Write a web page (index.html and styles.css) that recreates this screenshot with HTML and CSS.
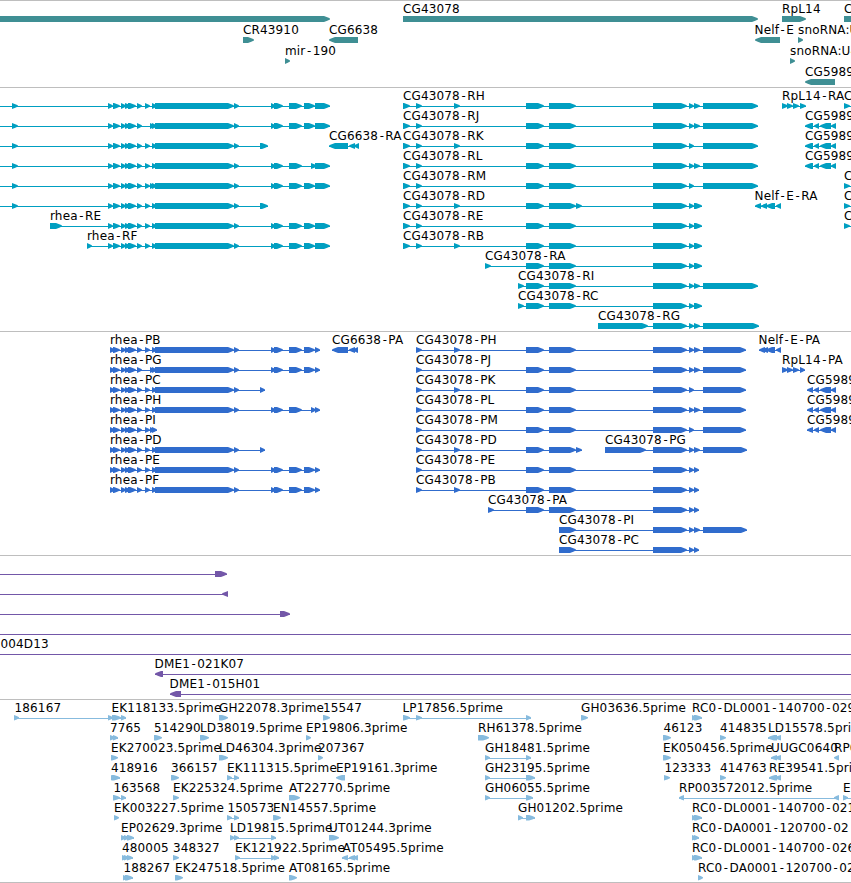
FILE: index.html
```
<!DOCTYPE html>
<html lang="en">
<head>
    <meta charset="UTF-8">
    <title>Genome Browser</title>
    <link rel="stylesheet" href="styles.css">
</head>
<body>
    <div class="browser">
        <div class="track genes" id="genes"></div>
        <div class="track transcripts" id="transcripts"></div>
        <div class="track proteins" id="proteins"></div>
        <div class="track clones" id="clones"></div>
        <div class="track ests" id="ests"></div>
    </div>
    <script src="tracks.js"></script>
</body>
</html>
```
FILE: styles.css
```
body {
    margin: 0;
    background: #fff;
    overflow: hidden;
}

.browser {
    display: flex;
    flex-direction: column;
    width: 851px;
    height: 883px;
    overflow: hidden;
    border-bottom: 1px solid #bebebe;
    box-sizing: border-box;
}

.track {
    box-sizing: border-box;
    border-top: 1px solid #bebebe;
    flex: none;
}

.track svg {
    display: block;
    width: 851px;
    height: 100%;
    overflow: hidden;
}

.genes {
    height: 87px;
    fill: #3f8f94;
}

.transcripts {
    height: 244px;
    fill: #009fc1;
}

.proteins {
    height: 224px;
    fill: #306ccd;
}

.clones {
    height: 144px;
    fill: #7357a8;
}

.ests {
    height: 183px;
    fill: #87bbde;
}

.label {
    font-family: "DejaVu Sans", sans-serif;
    font-size: 12px;
    letter-spacing: 0.15px;
    fill: #000;
}

.dash {
    font-family: "DejaVu Sans Mono", monospace;
    letter-spacing: 0;
}

.intron {
    shape-rendering: crispEdges;
}
```
FILE: tracks.js
```
// feature: [row, strand, label, label x, exons, line start, line end]
// exons are "start-end" pairs separated by spaces

var rhea = '113-120 121-126 125-131 128-136 137-142 ';
var body = '152-157 155-234 234-239 ';
var tail = '271-276 274-283 289-302 ';
var mid = '526-544 549-576 ';
var end3 = '653-687 689-694 694-700 703-758';
var end2 = '653-687 689-694 703-758';
var endS = '653-687 689-694 694-702';
var pEnd3 = '653-687 689-694 694-700 703-746';
var pEnd2 = '653-687 689-694 703-746';
var pEndS = '653-687 689-694 694-699';
var cg5989 = '805-813 814-819 820-831 831-836';
var cg5989p = '807-813 814-819 820-831 831-836';

var genes = [
    [0, '+', '', 0, '-10-330'],
    [0, '+', 'CG43078', 403, '403-758'],
    [0, '+', 'RpL14', 782, '782-806'],
    [0, '+', 'C', 844, '844-870'],
    [1, '+', 'CR43910', 243, '243-254'],
    [1, '-', 'CG6638', 329, '329-358'],
    [1, '-', 'Nelf-E', 754.5, '755-780'],
    [1, '+', 'snoRNA:U', 798, '798-803'],
    [2, '+', 'mir-190', 285, '285-290'],
    [2, '+', 'snoRNA:U4', 790, '790-795'],
    [3, '-', 'CG5989', 805, '805-835']
];

var transcripts = [
    [0, '+', '', 0, '12-18 108-113 ' + rhea + '145-150 ' + body + tail + '304-315 315-330', 0],
    [1, '+', '', 0, '12-18 108-113 ' + rhea + '150-155 ' + body + tail + '304-315 315-330', 0],
    [2, '+', '', 0, '12-18 108-113 ' + rhea + '145-150 ' + body + '260-268', 0],
    [3, '+', '', 0, '12-18 108-113 ' + rhea + '145-150 ' + body + tail + '311-317 315-330', 0],
    [4, '+', '', 0, '12-18 108-113 ' + rhea + '145-150 150-155 ' + body + tail + '304-315 315-330', 0],
    [5, '+', '', 0, '12-18 108-113 ' + rhea + '145-150 ' + body + '260-268', 0],
    [6, '+', 'rhea-RE', 50, '50-62 108-113 ' + rhea + '145-150 ' + body + tail + '304-315 315-330'],
    [7, '+', 'rhea-RF', 87, '87-92 108-113 ' + rhea + '145-150 ' + body + tail + '304-315 315-330'],
    [2, '-', 'CG6638-RA', 329, '329-348 349-355 354-359'],
    [0, '+', 'CG43078-RH', 403, '403-410 416-422 454-460 ' + mid + end3],
    [1, '+', 'CG43078-RJ', 403, '403-410 416-422 ' + mid + end3],
    [2, '+', 'CG43078-RK', 403, '403-410 416-422 454-460 ' + mid + end2],
    [3, '+', 'CG43078-RL', 403, '403-410 416-422 ' + mid + end3],
    [4, '+', 'CG43078-RM', 403, '403-410 416-422 ' + mid + end2],
    [5, '+', 'CG43078-RD', 403, '403-410 416-422 454-460 ' + mid + '576-582 ' + endS],
    [6, '+', 'CG43078-RE', 403, '403-410 416-422 ' + mid + endS],
    [7, '+', 'CG43078-RB', 403, '403-410 416-422 454-460 ' + mid + endS],
    [8, '+', 'CG43078-RA', 485, '485-491 ' + mid + endS],
    [9, '+', 'CG43078-RI', 518, '518-524 ' + mid + end3],
    [10, '+', 'CG43078-RC', 518, '518-524 ' + mid + endS],
    [11, '+', 'CG43078-RG', 598, '598-648 653-687 689-694 694-700 703-759'],
    [0, '+', 'RpL14-RA', 782, '782-788 787-793 793-799 800-806'],
    [0, '+', 'C', 844, '844-850', 844, 851],
    [1, '-', 'CG5989', 805, cg5989],
    [2, '-', 'CG5989', 805, cg5989],
    [3, '-', 'CG5989', 805, cg5989],
    [4, '+', 'C', 844, '844-850', 844, 851],
    [5, '+', 'C', 844, '844-850', 844, 851],
    [6, '+', 'C', 844, '844-850', 844, 851],
    [5, '-', 'Nelf-E-RA', 754.5, '755-761 761-767 766-775 776-781']
];

var proteins = [
    [0, '+', 'rhea-PB', 110, '110-115 ' + rhea + '145-150 ' + body + tail + '304-315 315-320'],
    [1, '+', 'rhea-PG', 110, '110-115 ' + rhea + '150-155 ' + body + tail + '304-315 315-320'],
    [2, '+', 'rhea-PC', 110, '110-115 ' + rhea + '145-150 ' + body + '260-265'],
    [3, '+', 'rhea-PH', 110, '110-115 ' + rhea + '145-150 ' + body + tail + '311-316 315-320'],
    [4, '+', 'rhea-PI', 110, '110-115 ' + rhea + '145-150 150-155 152-157'],
    [5, '+', 'rhea-PD', 110, '110-115 ' + rhea + '145-150 ' + body + '260-265'],
    [6, '+', 'rhea-PE', 110, '110-115 ' + rhea + '145-150 ' + body + tail + '304-315 315-320'],
    [7, '+', 'rhea-PF', 110, '110-115 ' + rhea + '145-150 ' + body + tail + '304-315 315-320'],
    [0, '-', 'CG6638-PA', 332, '332-348 349-355 353-358'],
    [0, '+', 'CG43078-PH', 416, '416-422 454-460 ' + mid + pEnd3],
    [1, '+', 'CG43078-PJ', 416, '416-422 ' + mid + pEnd3],
    [2, '+', 'CG43078-PK', 416, '416-422 454-460 ' + mid + pEnd2],
    [3, '+', 'CG43078-PL', 416, '416-422 ' + mid + pEnd3],
    [4, '+', 'CG43078-PM', 416, '416-422 ' + mid + pEnd2],
    [5, '+', 'CG43078-PD', 416, '416-422 454-460 ' + mid + '576-582'],
    [5, '+', 'CG43078-PG', 605, '605-646 653-687 689-694 694-700 703-747'],
    [6, '+', 'CG43078-PE', 416, '416-422 ' + mid + pEndS],
    [7, '+', 'CG43078-PB', 416, '416-422 454-460 ' + mid + pEndS],
    [8, '+', 'CG43078-PA', 488, '488-494 ' + mid + pEndS],
    [9, '+', 'CG43078-PI', 559, '559-576 653-687 689-694 694-700 703-747'],
    [10, '+', 'CG43078-PC', 559, '559-576 ' + pEndS],
    [0, '-', 'Nelf-E-PA', 758.5, '759-765 762-768 766-775 776-781'],
    [1, '+', 'RpL14-PA', 782, '782-788 787-793 793-799 800-805'],
    [2, '-', 'CG5989', 807, cg5989p],
    [3, '-', 'CG5989', 807, cg5989p],
    [4, '-', 'CG5989', 807, cg5989p]
];

var clones = [
    [0, '+', '', 0, '215-227', 0],
    [1, '-', '', 0, '222-228', 0],
    [2, '+', '', 0, '280-290', 0],
    [3, '+', '', 0, '', 0, 851],
    [4, '+', '004D13', 0.5, '', 0, 851],
    [5, '-', 'DME1-021K07', 154.5, '155-163', 155, 851],
    [6, '-', 'DME1-015H01', 169.5, '170-181', 170, 851]
];

var ests = [
    [0, '+', '186167', 14.5, '14-19 108-113 112-121 121-126'],
    [0, '+', 'EK118133.5prime', 111.5, ''],
    [0, '+', 'GH22078.3prime', 219, '219-228'],
    [0, '+', '15547', 323, '323-330'],
    [0, '+', 'LP17856.5prime', 402.5, '403-410 416-422 526-531'],
    [0, '+', 'GH03636.5prime', 581, '581-588'],
    [0, '+', 'RC0-DL0001-140700-029', 692, '692-697 694-702'],
    [1, '+', '7765', 110, '110-115 113-118'],
    [1, '+', '514290', 154, '154-162'],
    [1, '+', 'LD38019.5prime', 200, '200-209'],
    [1, '+', 'EP19806.3prime', 306, '306-311'],
    [1, '+', 'RH61378.5prime', 478, '478-489'],
    [1, '+', '46123', 663.5, '663-671'],
    [1, '+', '414835', 720, '720-726'],
    [1, '-', 'LD15578.5prime', 768, '768-777 775-781'],
    [2, '+', 'EK270023.5prime', 111, '111-118'],
    [2, '+', 'LD46304.3prime', 219, '219-228'],
    [2, '+', '207367', 318, '318-323'],
    [2, '+', 'GH18481.5prime', 485, '485-490 526-531'],
    [2, '+', 'EK050456.5prime', 663, '663-671'],
    [2, '-', 'UUGC0640', 771, '771-777 775-781'],
    [2, '-', 'RP0', 834, '834-839'],
    [3, '+', '418916', 111, '111-116 112-120'],
    [3, '+', '366157', 171, '171-179'],
    [3, '+', 'EK111315.5prime', 227, '227-232 234-239'],
    [3, '-', 'EP19161.3prime', 336, '336-345'],
    [3, '+', 'GH23195.5prime', 485, '485-490 526-535'],
    [3, '+', '123333', 664.5, '664-670'],
    [3, '+', '414763', 720, '720-726'],
    [3, '-', 'RE39541.5prime', 769, '769-777 775-781'],
    [4, '+', '163568', 113.5, '113-120 121-126'],
    [4, '+', 'EK225324.5prime', 173, '173-179'],
    [4, '+', 'AT22770.5prime', 289, '289-300'],
    [4, '+', 'GH06055.5prime', 485, '485-490 526-533'],
    [4, '-', 'RP003572012.5prime', 679, '679-684 834-839'],
    [4, '+', 'E', 843, '843-848', 843, 851],
    [5, '+', 'EK003227.5prime', 114, '114-119'],
    [5, '+', '150573', 227.5, '227-232 234-239'],
    [5, '+', 'EN14557.5prime', 273, '273-281'],
    [5, '+', 'GH01202.5prime', 518, '518-523 526-535'],
    [5, '+', 'RC0-DL0001-140700-021', 692, '692-697 694-702'],
    [6, '+', 'EP02629.3prime', 121, '121-126 124-129 127-134'],
    [6, '+', 'LD19815.5prime', 230, '230-235 234-239 271-276'],
    [6, '+', 'UT01244.3prime', 329, '329-339'],
    [6, '+', 'RC0-DA0001-120700-02', 692, '692-697 694-699'],
    [7, '+', '480005', 122, '122-127 124-129 127-133'],
    [7, '+', '348327', 173, '173-179'],
    [7, '+', 'EK121922.5prime', 235, '235-240 271-276 274-279'],
    [7, '-', 'AT05495.5prime', 342.5, '342-348 349-355 353-358'],
    [7, '+', 'RC0-DL0001-140700-026', 692, '692-697 694-702'],
    [8, '+', '188267', 123.5, '123-128 125-133'],
    [8, '+', 'EK247518.5prime', 175, '175-183'],
    [8, '+', 'AT08165.5prime', 289, '289-297'],
    [8, '+', 'RC0-DA0001-120700-02', 698, '698-703']
];

// box with an arrow head pointing along the strand
function exon(s, e, y, h, strand) {
    var head = Math.min(6, e - s);
    var d = strand === '+' ? 1 : -1;
    var back = d > 0 ? s : e;
    var tip = d > 0 ? e : s;
    var neck = tip - d * head;
    var mid = tip - d * head * 0.45;
    var m = y + h / 2;
    return `<polygon points="${back},${y} ${neck},${y} ${mid},${m - 1.8} ${tip},${m - 0.6} ${tip},${m + 0.6} ${mid},${m + 1.8} ${neck},${y + h} ${back},${y + h}"/>`;
}

// top = y of the first bar inside the track
function draw(id, features, top, step, h) {
    var out = '';
    features.forEach(function (f) {
        var y = top + f[0] * step;
        var exons = (f[4].match(/-?\d+-\d+/g) || []).map(function (t) {
            var p = t.match(/^(-?\d+)-(\d+)$/);
            return [+p[1], +p[2]];
        });
        var from = f[5] !== undefined ? f[5] : (exons.length ? exons[0][0] : 0);
        var to = f[6] !== undefined ? f[6] : (exons.length ? exons[exons.length - 1][1] : 0);
        if (to > from && (exons.length !== 1 || f[5] !== undefined)) {
            out += `<rect class="intron" x="${from}" y="${y + 3}" width="${to - from}" height="1"/>`;
        }
        exons.forEach(function (p) {
            out += exon(p[0], p[1], y, h, f[1]);
        });
        if (f[2]) {
            var text = f[2].replace(/-/g, '<tspan class="dash">-</tspan>');
            out += `<text class="label" x="${f[3]}" y="${y - 3}">${text}</text>`;
        }
    });
    document.getElementById(id).innerHTML = '<svg>' + out + '</svg>';
}

draw('genes', genes, 15, 21, 6);
draw('transcripts', transcripts, 15, 20, 6);
draw('proteins', proteins, 15, 20, 6);
draw('clones', clones, 15, 20, 6);
draw('ests', ests, 15, 20, 5.5);
```
